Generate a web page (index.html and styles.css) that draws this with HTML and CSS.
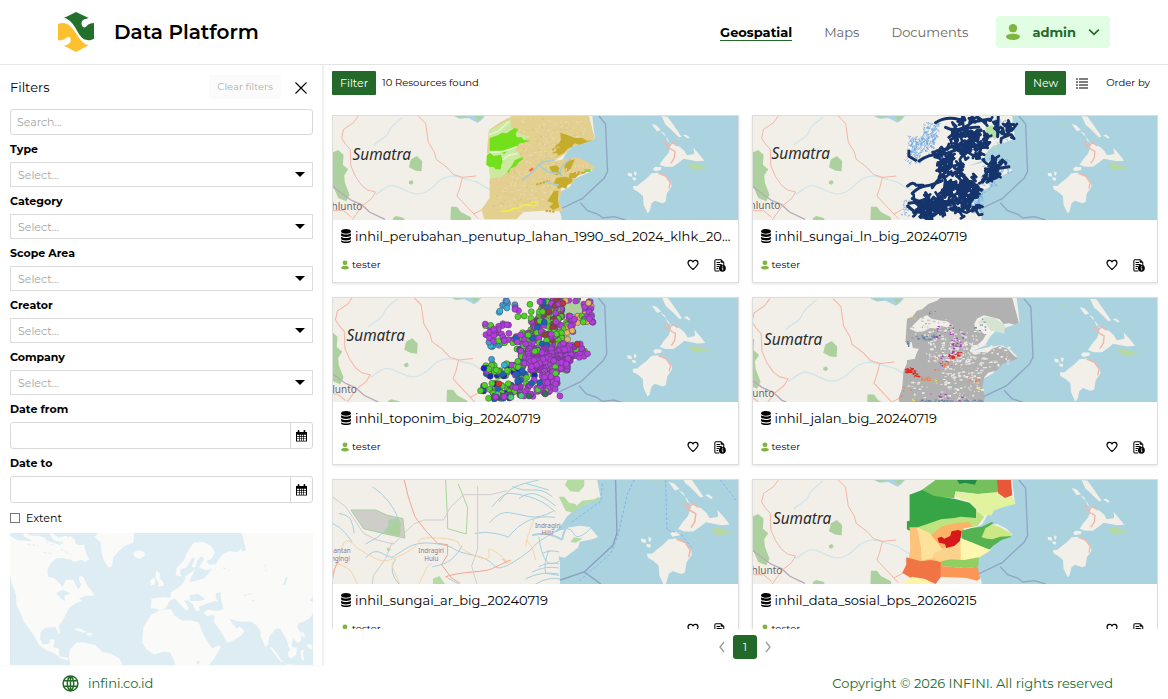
FILE: index.html
```html
<!DOCTYPE html>
<html lang="en">
<head>
<meta charset="utf-8">
<title>Data Platform</title>
<meta name="viewport" content="width=device-width, initial-scale=1">
<link rel="stylesheet" href="styles.css">
</head>
<body>
<svg class="defs" aria-hidden="true">
  <symbol id="i-db" viewBox="0 0 28 40"><path d="M0 6C0-2 28-2 28 6v2c0 7-28 7-28 0zM0 12c5 5 23 5 28 0v6c0 6-28 6-28 0zM0 22c5 5 23 5 28 0v6c0 6-28 6-28 0zM0 32c5 5 23 5 28 0v3c0 7-28 7-28 0z"/></symbol>
  <symbol id="i-user" viewBox="0 0 40 46"><circle cx="20" cy="12" r="12"/><path d="M0 36c0-11 40-11 40 0 0 13-40 13-40 0z"/></symbol>
  <symbol id="i-heart" viewBox="0 0 24 24"><path d="M12 21C5 15 2 12 2 8c0-6 8-7 10-2 2-5 10-4 10 2 0 4-3 7-10 13z" fill="none" stroke="currentColor" stroke-width="2.4" stroke-linejoin="round"/></symbol>
  <symbol id="i-info" viewBox="0 0 34 38"><path d="M15 35H5c-2 0-3-1-3-3V5c0-2 1-3 3-3h15l8 8v8M7 10h10M7 16h15M7 22h7M7 28h5" fill="none" stroke="currentColor" stroke-width="3"/><path d="M19 2v9h9z"/><circle cx="24" cy="27" r="10"/><path d="M25 20v3m-3 3h3v7" fill="none" stroke="#fff" stroke-width="2.5"/></symbol>
  <symbol id="i-cal" viewBox="0 0 32 34"><path d="M0 5h5V2c0-3 5-3 5 0v3h12V2c0-3 5-3 5 0v3h5v28H0z"/><path d="M3 13h6v4H3zm8 0h4v4h-4zm6 0h4v4h-4zm6 0h6v4h-6zM3 19h6v5H3zm8 0h4v5h-4zm6 0h4v5h-4zm6 0h6v5h-6zM3 26h6v5H3zm8 0h4v5h-4zm6 0h4v5h-4zm6 0h6v5h-6z" fill="#fff"/></symbol>
  <symbol id="isles" viewBox="0 0 1218 312" overflow="visible">
    <g fill="#f2efe9">
      <path d="M988 0l18 2 20 28 22 32-8 2-26-26-14-12zM958 24l14 4 14 14-12 4zM984 46l12 6 10 24 16 8 20 8 14 12 8 14 22-4-2-18 16 18 16 20-22 2-20-4-20-4-12 10-20 14h-24l-16-6 12-18 14-16 8-24-10-20zM1052 58l10-2 10 8-4 4zM962 158l8-6 18 2-2 8-18 4z"/>
      <path d="M926 200l16-12 16-16 20-2 24 12 14 18 2 12-14 20-4 26-10 4-22-8-10 8-6 24-6 6-12-26-2-26-14-12-14-8-2-10 14-1zM886 170l12 2 2 10-12-2zM906 166l8 4-4 10-4-4zM900 184l12 2-2 8-8-2z"/>
    </g>
    <path d="M996 78l14 18 18 10-2 20-10 16M1008 88l16-8 10 10M978 172l22 8 14 20-4 18" fill="none" stroke="#f3b5a5" stroke-width="4"/>
    <path d="M1066 146l22-4 28 10 14 6-20 0-24 6zM908 16l8-2 2 8zM930 24l8 4 0 8z" fill="#b5d8a4"/>
  </symbol>
  <symbol id="base" viewBox="0 0 1218 312" overflow="visible">
    <rect x="-120" y="-60" width="1480" height="500" fill="#f2efe9"/>
    <path d="M775-60L780 0l8 68-38 14-28 8-18 18-15 26-40 16 48-12 38-6 28 14 18 18-30 14-26 12-12 22-34 18-4 40 12 30 3 30h12v132h700V-60z" fill="#aad3df"/>
    <path d="M365-60V0l18 8 25-2 28 14 12-8 10-12v-60z" fill="#aad3df"/>
    <path d="M368 0l14 6 24-5zM428 0l10 14 16-14z" fill="#add19e"/>
    <path d="M0 110l18-8 16 14-2 30 16 14-12 18 2 22 14 36-10 20-24-10L0 205zM236 130l18-10 16 16-2 30-18-2-20-10zM356 272l18 0 12 16 30 16 2 20h-64zM182 306l10-6 24 6v14h-34zM230 196l10-4 4 8-6 6-8-3z" fill="#add19e"/>
    <path d="M130 236c28-18 38-36 70-22s50 28 80 14 30-34 62-44 44 4 78 10 30 26 64 28M125 88c10-16 36-18 44-40s24-28 42-44" fill="none" stroke="#d3e5e9" stroke-width="4"/>
    <path d="M0 210l26 20 30 22 32 14 24 22 46 22" fill="none" stroke="#b8a9b7" stroke-width="4"/>
    <path d="M78 0L64 20 34 40 28 66 38 82 54 100 56 150 70 182 88 208 106 222 130 228 118 248 90 270 60 312M0 284h34l24 20M258 0l22 22 8 56 18 30 6 22 32 24 20 22 28 8 40-4M390 186l-8 32-8 22 30 32 34 36M425 294l30-16" fill="none" stroke="#f5b6a5" stroke-width="3"/>
    <path d="M800 0l20 24 6 142-10 20-66 62-72 34M744 260l22 24 30 10 16 12 34-4 34 10" fill="none" stroke="#91a5c5" stroke-width="4"/>
    <use href="#isles" width="1218" height="312"/>
  </symbol>
</svg>

<header class="topbar">
  <a class="brand" href="#">
    <svg class="logo" viewBox="0 0 108 120" role="img" aria-label="Logo">
      <path d="M18 17C30 13 42 5 54 0l38 18c-8 3-18 4-21 12-1 6 0 13 5 16 4 1 8-2 11-5 5-5 12-8 21-8v47c-14 6-20 5-30 2C61 71 55 44 36 27c-6-5-11-8-18-10z" fill="#236f2c"/>
      <path d="M0 36c13-5 27-3 36 6 15 13 23 34 37 47 6 6 12 10 20 10l-39 21-36-19c9-1 18-6 20-13 1-7-1-12-5-14-9 1-16 13-33 11z" fill="#fdc12f"/>
    </svg>
    <span>Data Platform</span>
  </a>
  <div class="top-right">
    <nav class="nav">
      <a class="active" href="#">Geospatial</a>
      <a href="#">Maps</a>
      <a href="#">Documents</a>
    </nav>
    <button class="account" type="button">
      <svg class="avatar"><use href="#i-user"/></svg>
      <span>admin</span>
      <svg class="chevron" viewBox="0 0 10 6"><path d="M1 1l4 4 4-4" fill="none" stroke="currentColor" stroke-width="1.4"/></svg>
    </button>
  </div>
</header>

<div class="workspace">
  <aside class="filters">
    <div class="filters-head">
      <h2>Filters</h2>
      <button class="clear" type="button">Clear filters</button>
      <button class="close" type="button" aria-label="Close filters"><svg viewBox="0 0 12 12"><path d="M.5.5l11 11M11.5.5l-11 11" stroke="#000" stroke-width="1.1"/></svg></button>
    </div>
    <input class="search" type="text" placeholder="Search..." aria-label="Search">
    <div class="field"><label for="f-type">Type</label><div class="select"><select id="f-type"><option>Select...</option></select></div></div>
    <div class="field"><label for="f-cat">Category</label><div class="select"><select id="f-cat"><option>Select...</option></select></div></div>
    <div class="field"><label for="f-scope">Scope Area</label><div class="select"><select id="f-scope"><option>Select...</option></select></div></div>
    <div class="field"><label for="f-creator">Creator</label><div class="select"><select id="f-creator"><option>Select...</option></select></div></div>
    <div class="field"><label for="f-company">Company</label><div class="select"><select id="f-company"><option>Select...</option></select></div></div>
    <div class="field"><label for="f-from">Date from</label><div class="date"><input id="f-from" type="text"><button type="button" aria-label="Pick start date"><svg><use href="#i-cal"/></svg></button></div></div>
    <div class="field"><label for="f-to">Date to</label><div class="date"><input id="f-to" type="text"><button type="button" aria-label="Pick end date"><svg><use href="#i-cal"/></svg></button></div></div>
    <label class="extent"><input type="checkbox"><span>Extent</span></label>
    <svg class="world" viewBox="0 0 908 402" preserveAspectRatio="xMidYMin slice" role="img" aria-label="World map">
      <rect width="908" height="402" fill="#ddedf3"/>
      <g fill="#fafaf8">
        <path d="M0 8l22 14 40 2 30-8 34 12 24 8 20-14 10-14 16 14-4 22 20 6 4 30-24 6-30-10-22 0-16 12-12 22 2 20 20 6 16 16 8 10 6-14 10-22 4-14 14-4 10 16 18 8 10 24 20 24 2 8-22 0-24 8 12 8-20 6-20 14-10 18-12 24-10 12 4 20-4 4-10-20-30 2-14 12-2 20 8 18 18-2 6-14 12 2-4 22 16 4 2 22 12 4 16 2-4 8-20-6-18-16-24-8-24-18-10-20-18-26-18-24-6-20-14-26-2-34-10-26L0 130z"/>
        <path d="M126 0l20 14 22-6 20 12 14 16 20 0 8 30 8 12-14 10-18-14-6-16-24-8-16-22-30-6-10-18zM42 0l22 8 20 0 24 8-8 12-30-4-30-14z"/>
        <path d="M264 0h108l-2 28-28 12-20 18-12 14-4 26-10 6-14-20-8-24-2-32-20-16zM370 58l14-6 18 4 2 12-16 10-16-8z"/>
        <path d="M180 348l20-20 22 0 34 8 20 20 26 6 26 14 8 16-8 20H184l-8-40z"/>
        <path d="M424 196l-2 30 18 0 8 8 18-8 12-22 16-8 14 16 22 22 6-10-14-20 10-4 16 14 10 20 10-2-2-12 14-4 14-6 20-6 20 6 6 18-18 6-30-4-12 8 12 12 10-4 12 2-4 18 14 18 14 22 14 24 22-10 22-16 6-12-14-12-8 6-14-14-8-16 16 6 22 4 26 0 16 10 12 16 2 20 14 30 8-10 2-20 20-24 14-2 10 20 8 12 8 26 14 18 2-10-8-18 4-18 14 14 10-8 2-18-14-22 6-12 14-4 20-12 14-26-4-20-12-6 10-12 14-4 8 26 6-8-4-22 14-10V0H694l6 20-6 28-14 10-22-4-20 10-14 16-6 14-20 2-10-12 16-6 10-20-12-20-24-12-28 4-16 22-14 32-20 20-4 22 14 4 12-8 6 18 10 4 14-30 10-34 12-10 8 8-16 24 18 10 22-4-12 14-12 14-22 6-20 4-12-16-8 20-12 10-14 10-12 8 0 16-20-2z"/>
        <path d="M400 280l24-36 24-12 34-4 12 20 22 14 28 0 22 6 10 30 18 32 12 16 20-10 6 6-20 34-20 26-12 16H500l-8-34-12-26-20-2-28 8-24-16-12-20z"/>
        <path d="M438 112l12 10-2 12 10 12 4 12-20 4 4-12-10-16zM420 142l10-8 6 6-2 14-12 4zM782 340l16 18 14 22 10 8-12-4-18-22-12-18zM818 390l36 6-4 6zM832 358l14-14 14-2-2 22-14 12-10-6zM870 352l12-2-4 10 4 22-8-4zM872 296l8 2 4 16-8-4zM888 336l14-4 6 14-10 2zM190 286l20 0 22 12-14 0-22-8zM232 298l18 4-8 6-12-2z"/>
      </g>
      <path d="M132 90l20-14 32 4 8 30 20 10-6 20 8 14-10 16-14-30-26 0-26-30zM138 180l22-10 22 12-20 6 4 16-10-4zM540 186l24-4 20 16-14 6-32 0zM618 180l14-2 0 18 6 28-8-2-6-16-8-12zM510 110l20-8 16-28 8 2-10 26 14 4-26 20-12 6-10-8zM556 386l12-4-2 14zM690 22l10 0 8 30-12 4zM818 156l10-26 4 4-6 20z" fill="#ddedf3"/>
      <path d="M52 34l34 4m14 20l28 4m-20-36l24 12m20 10l30 16m-50-42l24 10M700 188l30-8m-6 22l16 2m24-110l4 20m-130-10l20 8" fill="none" stroke="#e7f2f5" stroke-width="4" stroke-dasharray="9 6"/>
    </svg>
  </aside>

  <main class="results">
    <div class="toolbar">
      <button class="btn" type="button">Filter</button>
      <span class="count">10 Resources found</span>
      <button class="btn" type="button">New</button>
      <button class="plain" type="button" aria-label="List view"><svg class="list" viewBox="0 0 12 11"><path d="M0 1h2m1 0h9M0 4h2m1 0h9M0 7h2m1 0h9M0 10h2m1 0h9" stroke="#000" stroke-width="1.2"/></svg></button>
      <button class="plain order" type="button">Order by</button>
    </div>

    <div class="cards">
      <article class="card">
        <svg class="map" viewBox="0 0 1218 312" preserveAspectRatio="xMidYMid slice">
          <use href="#base" width="1218" height="312"/>
          <text class="m-big" x="61" y="131">Sumatra</text><text class="m-town" x="-2" y="282">hlunto</text>
          <path d="M470 42l35-24 35-18h230l18 68-38 16-28 6-22 22-34 24 36-8 36-4 28 14 24 18-30 12-26 8-12 26-34 12-6 48 12 24-60-2-60 4-22 22h-96l-8-30 24-34 0-56 8-22-6-20-10-40z" fill="#e3cf8f"/>
          <g id="cover"></g>
          <path d="M470 44l66-34 0 24 30 20 30 8-32 12-20 20 22 24-18 30-40 36-34 4-4-34-8-30 8-16z" fill="#cbeaa0"/>
          <path d="M472 66l24-8 14-8 14 2 22-16 12 4-8 14 4 10 14 0 6 8 20 2-20 6-12 2-10 12-24 8-12 12-16-10-28 0zM464 118l10-8 10 10 22-4 6 18-6 16 0 10-16 0-4-6-16-2-8-6zM524 168l14-18 10-18 22-8 4 4-14 10-8 12-18 8-4 12z" fill="#72e01b"/>
          <path d="M470 56l28-10 32-30M474 110l40-4 40-14M510 132l20-14 26-6" stroke="#dff5cb" stroke-width="5" fill="none"/>
          <path d="M510 282l4 4 18-2 10-6 18-2 8-8 22-2 10 4 10-2M598 258h22" stroke="#f0ee45" stroke-width="5" fill="none"/>
          <path d="M684 50l24 8 20 8 22 0 14 8 18-2-24 8-16 6-16-4-6 10-14 6-12 14-18 8 0-8-18 0 14-8 2-8 12-2-18-4 12-8 6-10zM650 152l22-4 10 8-4 10 10 8-16 4-12-8-6-10zM700 140l10-6 18-4-8 18-6 14-14 6-4-14zM712 172l26-6 14 2 18-8-12 12-20 6-8 8-20 0zM672 186l26-4 24 6-4 12-12 6-4 12-14-4-10 6-6-12-10-2zM655 240l10-16h14l-2 28 4 22-18 8-12-10 12-10-18-6z" fill="#c5ac2d"/>
          <path d="M612 206l40-12M640 284l30 4M690 80l-30 22" stroke="#c5ac2d" stroke-width="6" stroke-dasharray="7 3"/>
          <path d="M570 192l30-22 22-26 20-8 24-4M622 148l24 20 30 4 14 8M682 170l6-16 14-16 14-10M640 198l40 10" fill="none" stroke="#a9cbd2" stroke-width="5"/>
          <path d="M728 150l38 2M700 160l48 14" stroke="#f0cfb9" stroke-width="8" stroke-dasharray="4 7" fill="none"/><path d="M592 165l10-8" stroke="#ff6545" stroke-width="7"/>
          <path d="M752 160l22 0 2 8-10 0z" fill="#86d843"/>
        </svg>
        <div class="card-body"><a class="title" href="#"><svg class="db"><use href="#i-db"/></svg><span>inhil_perubahan_penutup_lahan_1990_sd_2024_klhk_2024</span></a>
        <div class="meta"><svg class="owner"><use href="#i-user"/></svg><span>tester</span><button type="button" aria-label="Favorite"><svg class="heart"><use href="#i-heart"/></svg></button><button type="button" aria-label="Details"><svg class="info"><use href="#i-info"/></svg></button></div></div>
      </article>

      <article class="card">
        <svg class="map" viewBox="0 0 1218 312" preserveAspectRatio="xMidYMid slice">
          <use href="#base" width="1218" height="312"/>
          <text class="m-big" x="58" y="130">Sumatra</text><text class="m-town" x="-8" y="280">nlunto</text>
          <g id="rivers"></g>
        </svg>
        <div class="card-body"><a class="title" href="#"><svg class="db"><use href="#i-db"/></svg><span>inhil_sungai_ln_big_20240719</span></a>
        <div class="meta"><svg class="owner"><use href="#i-user"/></svg><span>tester</span><button type="button" aria-label="Favorite"><svg class="heart"><use href="#i-heart"/></svg></button><button type="button" aria-label="Details"><svg class="info"><use href="#i-info"/></svg></button></div></div>
      </article>

      <article class="card">
        <svg class="map" viewBox="0 0 1218 312" preserveAspectRatio="xMidYMid slice">
          <g transform="translate(-19 -2) scale(1.02)"><use href="#base" width="1218" height="312"/></g>
          <text class="m-big" x="43" y="130">Sumatra</text><text class="m-town" x="0" y="285">lunto</text>
          <path d="M690 20l60-12 10 40-60 12z" fill="#add19e"/>
          <g id="places"></g>
        </svg>
        <div class="card-body"><a class="title" href="#"><svg class="db"><use href="#i-db"/></svg><span>inhil_toponim_big_20240719</span></a>
        <div class="meta"><svg class="owner"><use href="#i-user"/></svg><span>tester</span><button type="button" aria-label="Favorite"><svg class="heart"><use href="#i-heart"/></svg></button><button type="button" aria-label="Details"><svg class="info"><use href="#i-info"/></svg></button></div></div>
      </article>

      <article class="card">
        <svg class="map" viewBox="0 0 1218 312" preserveAspectRatio="xMidYMid slice">
          <g transform="translate(-30 2) scale(1.056)"><use href="#base" width="1218" height="312"/></g>
          <text class="m-big" x="35" y="140">Sumatra</text><text class="m-town" x="0" y="298">unto</text>
          <path d="M464 62l16-6 14-18 16-4 18-16 26-10 10-8h216l8 30 12 44-12 6-18-4-16 2-12-14-28-8-20-4-20 10-8 16 4 18 16 4 14 12-8 14-16 14-16 2-8 18 20 10 14-8 20 2 14-12 22-8 24 8 12 14 18 16-22 8-24 8-14 18-28 8-12 14-6 30 8 26-4 22H440l0-18 10-28 4-52 10-22 0-36-4-32z" fill="#b1b1b1"/>
          <path d="M472 92l18-18 14-14 20-8 14 10 30 6 16 2 20 14-20 4-16-4-14 8-20-2-20 10-20 2zM458 132l20 0 4 18 18 2-8 16-4 14-34 6z" fill="#f2efe9"/>
          <path d="M676 76l20-20 30 4 32 22-2 26-18-6-22-4-16-22z" fill="#d5e4cf"/>
          <g id="roads"></g>
        </svg>
        <div class="card-body"><a class="title" href="#"><svg class="db"><use href="#i-db"/></svg><span>inhil_jalan_big_20240719</span></a>
        <div class="meta"><svg class="owner"><use href="#i-user"/></svg><span>tester</span><button type="button" aria-label="Favorite"><svg class="heart"><use href="#i-heart"/></svg></button><button type="button" aria-label="Details"><svg class="info"><use href="#i-info"/></svg></button></div></div>
      </article>

      <article class="card">
        <svg class="map" viewBox="0 0 1218 312" preserveAspectRatio="xMidYMid slice">
          <rect width="1218" height="312" fill="#f2efe9"/>
          <path d="M795 0l10 55-40 14-30 14-30 26-18 26-24 24 40-16 40-6 30 4 24 30-14 6-40 8-6 18-40 30-18-4 4 20v63h600V0z" fill="#aad3df"/>
          <g transform="translate(-102 -22) scale(1.16)"><use href="#isles" width="1218" height="312"/></g>
          <path d="M706 0h50v18l-16 18-26-2-16-20zM680 50l16 0 14 18 20 4 6 14-16 12-20-6-10-20zM730 80l20-18 36-4 14-8 4 8-40 12-30 16zM715 186l10-14 26 4-20 12zM162 206l8-4 6 8-8 6zM302 296l20-8 16 24h-36z" fill="#b3dba2"/>
          <path d="M56 90h74l36 16 46 10 6 58-58-12-66-16z" fill="#cfcdca" stroke="#a9cf9f" stroke-width="3"/><path d="M168 120l30-6 8 16-2 38-50-10 14-20z" fill="#add19e"/>
          <path d="M340 0l6 120 0 26 56 16 4-80-16-40-12-30" fill="none" stroke="#a8d79b" stroke-width="3"/>
          <g fill="none" stroke="#a5d0dd" stroke-width="3" stroke-linejoin="round">
            <path d="M120 20q30 18 50 46t26 46q-24 30-60 60l-36 20M100 234q24-30 50-14t34 10 40-26 80-14 60 16 60 20 60 30 60-10 60-46 60-42 60 2 60-24M428 160q30-6 60 0t40 12q26-34 60-50t80-10M472 128q30-36 60-30t60 12 70-16M480 80q30-40 50-40t60 10 80 46M560 56q26-20 50-14t60 36M500 66q26-36 50-46t70-20M540 20q30 14 60 10t60 20M580 10l70 20M0 130q24 10 40 30l20 26M20 100q30 6 36 20t10 40M340 290q24 14 40 22M300 260q40-6 60-24t30-40M190 236q-14 20-10 40t20 36"/>
            <path d="M620 170q6 50 20 70t40 4M630 220q26-12 50-4M620 260q30-16 60-8M600 276q40-20 80-12M580 296q50-24 100-14M610 312q40-24 80-14M650 210q-16 40-10 70l40 6"/>
          </g>
          <path d="M600 166q50-12 90 14M690 178q4-28 20-44" stroke="#aad3df" stroke-width="6" fill="none"/>
          <path d="M0 290q20-60 30-90t30-10 40 30 40 20 70-16 50-40 60-10 60 18 50 36 40-10 60 30M10 250q40 10 50 30l16 32M190 240q-14 10-10 20l22 52M300 250q-20 10-20 20l-20 42M580 200l6-30 20-54M580 180q20 10 30 60" fill="none" stroke="#f4d6a9" stroke-width="3"/>
          <path d="M216 0l12 50 20 60 34 44 34 36 30 4 0 30-18 30 30 40 26 16M0 305q6-50 20-60M340 290q30-10 80-14t60-10 56-26M510 236l14 14" fill="none" stroke="#f3a492" stroke-width="3"/>
          <path d="M0 50l40 30 54 80 40 20 50 12 60-60 30-12h60l20-38 40-38 80 0 50-12M436 18l0 190-18 50 16 54M180 186l-20 50-36 50-4 26" fill="none" stroke="#d2ccd0" stroke-width="3"/>
          <path d="M850 0l4 160-12 36-86 80-72 24M756 276l50 36" fill="none" stroke="#8b9fc0" stroke-width="4"/>
          <path d="M906 0l-20 40-30 130-20 50-96 84M810 10l-4 54-90 64M1000 0l4 150 40 10 36 46M1164 0l50 64" fill="none" stroke="#83b3ea" stroke-width="3" stroke-dasharray="8 6"/>
          <g class="m-place"><text x="258" y="220">Indragiri</text><text x="276" y="243">Hulu</text><text x="608" y="144">Indragiri</text><text x="628" y="166">Hilir</text><text x="-8" y="219">uantan</text><text x="-4" y="242">ngingi</text></g>
        </svg>
        <div class="card-body"><a class="title" href="#"><svg class="db"><use href="#i-db"/></svg><span>inhil_sungai_ar_big_20240719</span></a>
        <div class="meta"><svg class="owner"><use href="#i-user"/></svg><span>tester</span><button type="button" aria-label="Favorite"><svg class="heart"><use href="#i-heart"/></svg></button><button type="button" aria-label="Details"><svg class="info"><use href="#i-info"/></svg></button></div></div>
      </article>

      <article class="card">
        <svg class="map" viewBox="0 0 1218 312" preserveAspectRatio="xMidYMid slice">
          <use href="#base" width="1218" height="312"/>
          <text class="m-big" x="62" y="133">Sumatra</text><text class="m-town" x="-2" y="282">hlunto</text>
          <path d="M500 36l50-36h186l4 40-64 2-66-8-4 20-60-2-46-14z" fill="#74c05c"/><path d="M614 0h60l-6 14-30-6-16 4z" fill="#238b45"/>
          <path d="M472 44l38-14 36 18 60 8 46 12 20 20 0 32-40 4-50 0-50 12-60 16-8-4 0-24 8-2z" fill="#37a446"/>
          <path d="M496 142l36-12 34-12 40-4 20-4 46 4 0-22 24 18-20 28-40 6-60-4-40 26z" fill="#bfe37f"/>
          <path d="M610 36l66 6 60-6 16 16 28-4 10 24-40 10-26 10-6 14-30 0-16-20-22-22-44-14z" fill="#e2f3a0"/>
          <path d="M734 0h42l4 46-22 8-20-14z" fill="#e9573a"/>
          <path d="M472 142l24 0 20 10 40 36 0 40 6 18-30 4-20 6-44-10 6-40z" fill="#fdc37b"/><path d="M494 142l36 16 50 50-28 24-44 10-2-40z" fill="#fee29b"/>
          <path d="M546 218l50-20 32-20 0 60-24 6-44 0-20-14z" fill="#fdd28a"/>
          <path d="M536 166l30-26 40-10 44-4 10 14-24 4-10 34-30 20-26 8-16-20z" fill="#fdb366"/>
          <path d="M556 174l12-4 8 6 18-8 4-14 20-4 10 4-4 28-18 16-24 6-4-12-18-4z" fill="#d7191c"/>
          <path d="M628 152l30-8 30-4 30-14 6 2-16 14 40 14 30 14-30 10-26 18-14 16-30-8-30-14-20-18z" fill="#54b251"/>
          <path d="M688 172l12-28 20-10 20 6 34 18 6 10-36 2-24 8-16-2z" fill="#cbe884"/>
          <path d="M624 174l32 12 44 18 16 6-32 20-14 12-22 2-22-8z" fill="#fdf6ae"/>
          <path d="M566 244l30-6 40 2 44-8-2 28-40 4-72-6z" fill="#91cf60"/>
          <path d="M462 232l44 12 30-4 30 6 0 44-16 22-36-16-38-2-26-16 12-24z" fill="#f17445"/><path d="M566 258l70 6 40-4 8 36-10 6-30-8-78-4z" fill="#fb9656"/><path d="M446 312l34-22 40 8 24 14z" fill="#fdf3aa"/>
        </svg>
        <div class="card-body"><a class="title" href="#"><svg class="db"><use href="#i-db"/></svg><span>inhil_data_sosial_bps_20260215</span></a>
        <div class="meta"><svg class="owner"><use href="#i-user"/></svg><span>tester</span><button type="button" aria-label="Favorite"><svg class="heart"><use href="#i-heart"/></svg></button><button type="button" aria-label="Details"><svg class="info"><use href="#i-info"/></svg></button></div></div>
      </article>
    </div>

    <nav class="pager" aria-label="Pages">
      <button type="button" aria-label="Previous page"><svg viewBox="0 0 6 12"><path d="M5 1L1 6l4 5" fill="none" stroke="currentColor" stroke-width="1.3"/></svg></button>
      <button class="current" type="button">1</button>
      <button type="button" aria-label="Next page"><svg viewBox="0 0 6 12"><path d="M1 1l4 5-4 5" fill="none" stroke="currentColor" stroke-width="1.3"/></svg></button>
    </nav>
  </main>
</div>

<footer class="footer">
  <a href="#"><svg class="globe" viewBox="0 0 16 16"><path d="M1 8a7 7 0 1 0 14 0A7 7 0 1 0 1 8zM8 1v14M1 5.500h14M1 10.500h14M8 1C4 4 4 12 8 15M8 1c4 3 4 11 0 14" fill="none" stroke="currentColor" stroke-width="1.400"/></svg><span>infini.co.id</span></a>
  <span>Copyright © 2026 INFINI. All rights reserved</span>
</footer>
<script src="maps.js"></script>
</body>
</html>
```

FILE: maps.js
```js
// Draws the dense vector layers of the dataset thumbnails.
const NS = 'http://www.w3.org/2000/svg';
let seed = 7;
function rnd() {
  seed = (seed * 16807) % 2147483647;
  return seed / 2147483647;
}
function add(parent, tag, attrs) {
  const node = document.createElementNS(NS, tag);
  for (const key in attrs) node.setAttribute(key, attrs[key]);
  parent.appendChild(node);
}
function pick(list) {
  return list[Math.floor(rnd() * list.length)];
}
// Each band is [top, bottom, left, right, count].
function scatter(bands, draw) {
  for (const [t, b, l, r, n] of bands) {
    for (let i = 0; i < n; i++) draw(l + rnd() * (r - l), t + rnd() * (b - t));
  }
}
const speckIn = (parent) => (colors, size) => (x, y) => add(parent, 'rect', { x: Math.round(x), y: Math.round(y), width: 2 + Math.round(rnd() * size), height: 2 + Math.round(rnd() * size / 2), fill: pick(colors) });

const coverSpeck = speckIn(document.getElementById('cover'));
scatter([[4, 60, 560, 760, 90], [60, 150, 560, 680, 110], [150, 240, 490, 660, 130], [240, 285, 480, 640, 70]], coverSpeck(['#ead9a6', '#ecdcb4', '#dac584'], 5));
scatter([[100, 200, 540, 600, 12], [185, 200, 475, 520, 10]], coverSpeck(['#f2c0a6'], 4));

const rivers = document.getElementById('rivers');
const squiggle = (size) => (x, y) => {
  const s = () => Math.round((rnd() - 0.5) * size);
  return `M${Math.round(x)} ${Math.round(y)}l${s()} ${s()} ${s()} ${s()} ${s()} ${s()}`;
};
let pale = '';
scatter([[20, 75, 515, 560, 70], [60, 110, 470, 550, 120], [95, 140, 465, 510, 40], [130, 170, 700, 775, 60], [150, 215, 690, 730, 50], [225, 290, 655, 692, 70], [10, 80, 700, 780, 40], [250, 305, 450, 480, 20]],
  (x, y) => { pale += squiggle(10)(x, y); });
add(rivers, 'path', { d: pale, fill: 'none', stroke: '#76abdf', 'stroke-width': 2 });
add(rivers, 'path', { d: 'M700 30l40 0 8 30-46 10zM722 90l14-4-4 14z', fill: '#b5dfa4' });
let dark = '';
scatter([[4, 20, 620, 775, 16], [28, 65, 750, 778, 14], [40, 100, 600, 710, 60], [100, 125, 550, 700, 24], [130, 175, 565, 630, 32], [140, 185, 700, 745, 34], [190, 245, 570, 680, 78], [252, 268, 500, 660, 30], [268, 290, 490, 680, 40], [290, 304, 505, 545, 14]],
  (x, y) => { dark += squiggle(26)(x, y); });
add(rivers, 'path', { d: dark, fill: 'none', stroke: '#14346b', 'stroke-width': 8, 'stroke-linejoin': 'round', 'stroke-linecap': 'round' });
add(rivers, 'path', { d: 'M550 20q30-20 70-10M580 34q40 20 80-16l50-8M738 0l-2 62M500 135q30-20 60-20t60-20M470 105l0 16 20 12M466 210q16-16 26-2l20 0M480 232q20-20 40-22t50-16M520 230q14 20 10 44M490 290l-24-20M570 222l0 50M540 215q20-30 60-66M470 262q40-4 60-20M590 64q40-34 90-30M570 105q30-20 90-20l46 10M480 248l40 16 90-10M720 160l50-8' , fill: 'none', stroke: '#14346b', 'stroke-width': 9, 'stroke-linejoin': 'round', 'stroke-linecap': 'round' });

const places = document.getElementById('places');
const violet = '#b43be0', green = '#4cd422', blue = '#1b62bd', cyan = '#31b4dc';
const dot = (colors) => (x, y) => add(places, 'circle', { cx: Math.round(x), cy: Math.round(y), r: 9, fill: pick(colors), stroke: '#4a4058', 'stroke-width': 1.5 });
scatter([[8, 24, 510, 550, 8], [30, 45, 500, 525, 3], [130, 148, 458, 520, 8]], dot([cyan, cyan, '#4b95d0']));
scatter([[6, 60, 540, 605, 7], [74, 90, 455, 530, 10], [90, 130, 460, 500, 16], [105, 135, 500, 570, 16]], dot([violet, violet, violet, violet, green]));
scatter([[0, 60, 620, 690, 90], [60, 110, 590, 690, 60], [100, 165, 545, 690, 90]], dot([violet, violet, violet, green, green, green, blue, '#8f3f3c']));
scatter([[0, 12, 690, 750, 8], [10, 55, 755, 778, 20], [52, 76, 690, 790, 34], [76, 105, 690, 725, 12]], dot([violet, violet, violet, green, '#e2b55e']));
scatter([[195, 235, 460, 565, 46], [255, 285, 450, 555, 28], [285, 305, 465, 540, 18], [185, 260, 550, 610, 30]], dot([green, green, green, green, blue, violet, '#1c26b8']));
scatter([[150, 180, 560, 760, 110], [135, 155, 690, 745, 14], [180, 218, 590, 715, 110], [220, 285, 625, 675, 70], [262, 285, 545, 630, 20]], dot([violet, violet, violet, violet, violet, violet, violet, green, '#9732bd']));
scatter([[288, 298, 485, 685, 20]], dot(['#3a6c55', '#3a6c55', '#48cc80', violet]));
for (const [x, y, c] of [[706, 124, '#ddb65d'], [735, 138, '#d12d31'], [500, 257, '#e02d2d'], [692, 16, '#c03340'], [478, 184, '#38a1da'], [567, 293, '#48cc80'], [445, 278, green], [766, 167, violet], [516, 201, cyan], [455, 211, '#1c26b8'], [598, 256, blue], [622, 254, blue], [570, 218, blue], [670, 226, green]]) dot([c])(x, y);

const speck = speckIn(document.getElementById('roads'));
scatter([[90, 120, 480, 680, 40], [120, 190, 520, 670, 130], [180, 240, 560, 690, 60], [220, 305, 560, 690, 70], [140, 210, 670, 770, 40], [250, 300, 460, 560, 14]], speck(['#efede8', '#e4e2de'], 8));
scatter([[56, 90, 470, 600, 30]], speck(['#b1b1b1', '#c9c8c5'], 7));
scatter([[110, 125, 475, 550, 30], [60, 110, 665, 700, 10], [304, 312, 490, 690, 60], [128, 142, 458, 470, 10], [38, 50, 530, 548, 4]], speck(['#5f7fa5', '#7990ab'], 6));
scatter([[120, 170, 595, 625, 26], [80, 120, 550, 650, 20], [170, 205, 560, 600, 12], [285, 310, 510, 640, 12]], speck(['#a63bb8'], 5));
scatter([[208, 222, 458, 484, 18], [220, 236, 480, 498, 12], [168, 182, 588, 606, 14], [160, 172, 605, 625, 8]], speck(['#e22b20'], 8));
scatter([[234, 246, 505, 542, 14], [180, 220, 545, 590, 14], [240, 250, 648, 680, 10], [260, 300, 440, 475, 5]], speck(['#f47a3e'], 5));
scatter([[50, 56, 473, 480, 3], [242, 254, 548, 552, 4], [266, 280, 674, 680, 4], [300, 306, 478, 484, 2]], speck(['#f3ec2c'], 5));
```

FILE: styles.css
```css
* { box-sizing: border-box; }
body {
  margin: 0;
  height: 100vh;
  display: flex;
  flex-direction: column;
  background: #fff;
  color: #000;
  font: 11px/16px Montserrat, Inter, "Open Sans", sans-serif;
}
button, input, select { font: inherit; color: inherit; }
button { border: 0; padding: 0; background: none; cursor: pointer; }
a { color: inherit; text-decoration: none; }
svg { display: block; fill: currentColor; flex: none; }
.defs { position: absolute; width: 0; height: 0; }

.topbar {
  flex: none;
  height: 65px;
  padding: 0 58px;
  display: flex;
  align-items: center;
  justify-content: space-between;
  border-bottom: 1px solid #e4e4e4;
}
.brand { display: flex; align-items: center; gap: 20px; font-size: 20px; line-height: 24px; font-weight: 600; }
.logo { width: 36px; height: 40px; }
.top-right { display: flex; align-items: center; gap: 28px; font-size: 13px; }
.nav { display: flex; align-items: center; gap: 32px; color: #666; }
.active { color: #000; font-weight: 700; border-bottom: 1px solid #22692a; }
.account {
  display: flex;
  align-items: center;
  gap: 12px;
  height: 32px;
  padding: 0 10px;
  border-radius: 4px;
  background: #e1fde4;
  color: #22692a;
  font-weight: 700;
}
.avatar { width: 14px; height: 16px; color: #7fb43e; }
.chevron { width: 12px; height: 8px; }

.workspace { flex: 1; min-height: 0; display: flex; }
.filters {
  flex: none;
  width: 323px;
  padding: 10px 9px 0 10px;
  overflow: hidden;
  display: flex;
  flex-direction: column;
  border-right: 1px solid #f0f0f0;
  box-shadow: 1px 0 2px #eee;
}
.filters-head { flex: none; height: 24px; display: flex; align-items: center; margin-bottom: 10px; }
.filters-head h2 { margin: 0 auto 0 0; font-size: 13px; font-weight: 400; }
.clear { padding: 4px 8px; background: #fbfbfb; color: #b0b0b0; font-size: 10px; }
.close { margin: 2px 6px 0 14px; }
.close svg { width: 12px; height: 12px; }
.search { flex: none; height: 26px; padding: 0 6px; border: 1px solid #d9d9d9; border-radius: 3px; }
.search::placeholder { color: #a5a5a5; }
.field { flex: none; display: flex; flex-direction: column; }
.field label { padding: 6px 0 5px; font-weight: 700; }
.select { position: relative; display: flex; }
.select::after {
  content: "";
  position: absolute;
  right: 8px;
  top: 10px;
  border: 5px solid transparent;
  border-top: 5px solid #000;
  border-bottom: 0;
  pointer-events: none;
}
select { appearance: none; width: 100%; height: 25px; padding: 0 7px; border: 1px solid #ddd; border-radius: 0; background: #fff; color: #a5a5a5; }
.date { display: flex; height: 27px; border: 1px solid #d9d9d9; border-radius: 3px; }
.date input { flex: 1; min-width: 0; border: 0; background: none; }
.date button { width: 22px; display: grid; place-items: center; border-left: 1px solid #d9d9d9; }
.date svg { width: 11px; height: 12px; }
.extent { flex: none; display: flex; align-items: center; gap: 6px; padding: 7px 0; }
.extent input { appearance: none; width: 10px; height: 10px; margin: 0; border: 1px solid #767676; }
.world { width: 100%; flex: 1; min-height: 0; }

.results { flex: 1; min-width: 0; padding: 0 10px 0 9px; display: flex; flex-direction: column; }
.toolbar { flex: none; display: flex; align-items: center; padding: 6px 0 20px; }
.btn { height: 24px; padding: 0 8px; border-radius: 1px; background: #22692a; color: #fff; }
.count { margin: 0 auto 0 6px; font-size: 10px; }
.plain { margin-left: 10px; }
.list { width: 12px; height: 11px; }
.order { margin: 0 8px 0 18px; font-size: 10px; }
.cards {
  flex: 1;
  min-height: 0;
  overflow: hidden;
  display: grid;
  grid-template-columns: repeat(2, minmax(0, 1fr));
  grid-auto-rows: max-content;
  gap: 14px 13px;
}
.card { border: 1px solid #ddd; box-shadow: 0 1px 3px #e4e4e4; }
.map { width: 100%; height: 104px; }
.m-big { font: italic 46px "Noto Sans", sans-serif; fill: #2b2b2b; }
.m-town { font: 30px "Noto Sans", sans-serif; fill: #6a6a6a; }
.m-place { font: 19px "Noto Sans", sans-serif; fill: #8d7a98; }
.card-body { padding: 6px 5px 8px 8px; }
.title { display: flex; align-items: center; gap: 4px; font-size: 13px; line-height: 20px; }
.title span { overflow: hidden; text-overflow: ellipsis; white-space: nowrap; }
.db { width: 10px; height: 14px; }
.meta { display: flex; align-items: center; gap: 3px; padding: 10px 3px 0 0; font-size: 10px; line-height: 18px; }
.meta span { flex: 1; }
.owner { width: 8px; height: 10px; color: #7fb43e; }
.heart { width: 12px; height: 12px; }
.info { width: 12px; height: 13px; }
.meta button { margin-right: 4px; }
.meta button + button { margin-left: 8px; }
.pager { flex: none; height: 36px; display: flex; align-items: center; justify-content: center; gap: 8px; color: #999; }
.pager svg { width: 6px; height: 12px; }
.pager .current { width: 24px; height: 24px; border-radius: 3px; background: #22692a; color: #fff; }

.footer {
  flex: none;
  height: 34px;
  padding: 2px 55px 0 62px;
  display: flex;
  align-items: center;
  justify-content: space-between;
  color: #22692a;
  font-size: 13px;
}
.footer a { display: flex; align-items: center; gap: 9px; }
.globe { width: 17px; height: 17px; }
```
